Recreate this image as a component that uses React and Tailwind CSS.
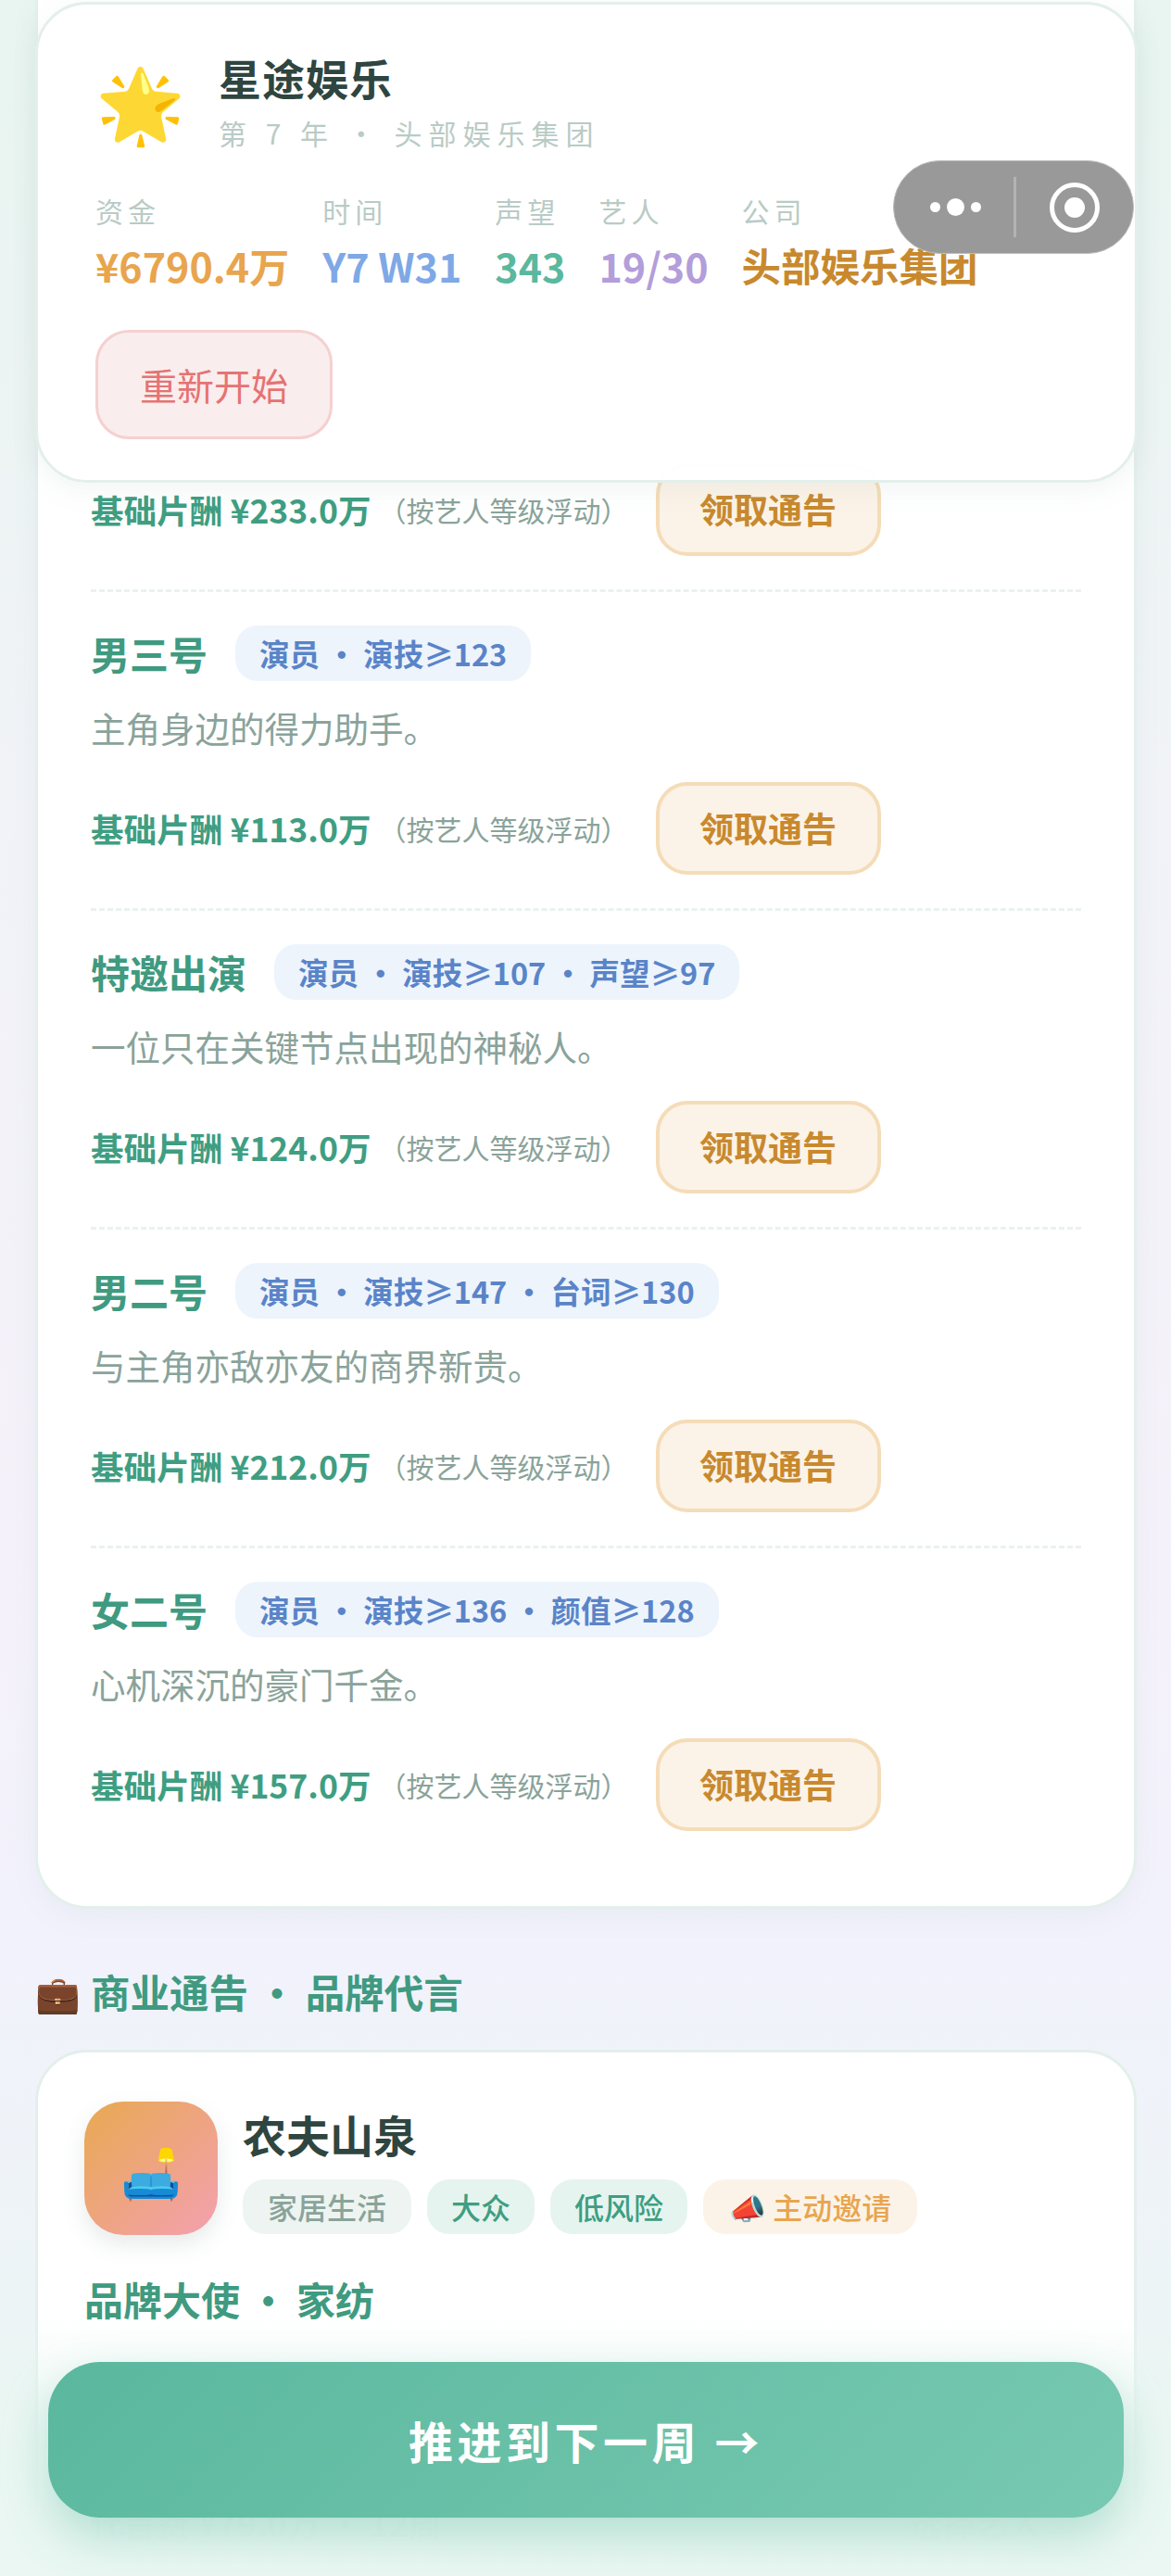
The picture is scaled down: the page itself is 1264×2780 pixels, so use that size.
const cjk = "font-['Noto_Sans_CJK_SC','Noto_Sans',sans-serif]"

const roles = [
  { name: '男三号', tags: '演员 · 演技≥123', desc: '主角身边的得力助手。', pay: '¥113.0万' },
  { name: '特邀出演', tags: '演员 · 演技≥107 · 声望≥97', desc: '一位只在关键节点出现的神秘人。', pay: '¥124.0万' },
  { name: '男二号', tags: '演员 · 演技≥147 · 台词≥130', desc: '与主角亦敌亦友的商界新贵。', pay: '¥212.0万' },
  { name: '女二号', tags: '演员 · 演技≥136 · 颜值≥128', desc: '心机深沉的豪门千金。', pay: '¥157.0万' },
]

const stats = [
  { label: '资金', value: '¥6790.4万', color: 'text-[#e8a54e]' },
  { label: '时间', value: 'Y7 W31', color: 'text-[#7fa8e6]' },
  { label: '声望', value: '343', color: 'text-[#5ab89e]' },
  { label: '艺人', value: '19/30', color: 'text-[#b39ddb]' },
  { label: '公司', value: '头部娱乐集团', color: 'text-[#c8892e]' },
]

function RoleFooter({ pay }) {
  return (
    <div className="flex items-center">
      <span className="text-[35.6px] font-bold text-[#3f9e82]">基础片酬 {pay}</span>
      <span className="ml-[8px] text-[30px] text-[#8aa39a]">（按艺人等级浮动）</span>
      <button className="ml-[29px] h-[100px] w-[243px] rounded-[34px] border-[4px] border-[#f5dcb8] bg-[#fcf3e8] text-[37px] font-bold text-[#c8892e]">
        领取通告
      </button>
    </div>
  )
}

function RoleRow({ role, last }) {
  return (
    <div className={`pt-[36px] ${last ? '' : 'border-b-[3px] border-dashed border-[#eaf2ef] pb-[36px]'}`}>
      <div className="flex items-center gap-[30px]">
        <span className="text-[42px] font-bold leading-[60px] text-[#3f9a80]">{role.name}</span>
        <span className="rounded-[24px] bg-[#edf4fc] px-[26px] text-[32.5px] font-bold leading-[60px] text-[#5a84c8]">
          {role.tags}
        </span>
      </div>
      <p className="mt-[20px] text-[37.5px] leading-[60px] text-[#8aa39a]">{role.desc}</p>
      <div className="mt-[29px]">
        <RoleFooter pay={role.pay} />
      </div>
    </div>
  )
}

function Capsule() {
  return (
    <div className="absolute left-[964px] top-[173px] flex h-[101px] w-[260px] items-center rounded-full border border-[#bdbdbd] bg-[#999999]">
      <div className="flex w-[129px] items-center justify-center gap-[7px] pl-[3px]">
        <span className="h-[11px] w-[11px] rounded-full bg-white" />
        <span className="h-[19px] w-[19px] rounded-full bg-white" />
        <span className="h-[11px] w-[11px] rounded-full bg-white" />
      </div>
      <div className="h-[65px] w-[3px] bg-[#b3b3b3]" />
      <div className="flex flex-1 items-center justify-center">
        <div className="flex h-[54px] w-[54px] items-center justify-center rounded-full border-[5px] border-white">
          <span className="h-[22px] w-[22px] rounded-full bg-white" />
        </div>
      </div>
    </div>
  )
}

export default function App() {
  return (
    <div className={`relative h-[2780px] w-[1264px] overflow-hidden bg-[linear-gradient(180deg,#e8f5f0_0%,#f1f3f7_30%,#f5f1fa_60%,#f2f2fc_75%,#e9f6f1_100%)] ${cjk}`}>
      {/* scrolled page content */}
      <div className="pl-[38px] pr-[37px]">
        <div className="rounded-b-[56px] border-x-[3px] border-b-[3px] border-[#e3efeb] bg-white px-[57px] pb-[81px] pt-[500px] shadow-[0_10px_30px_rgba(90,140,120,0.06)]">
          <div className="border-b-[3px] border-dashed border-[#eaf2ef] pb-[36px]">
            <RoleFooter pay="¥233.0万" />
          </div>
          {roles.map((role, i) => (
            <RoleRow key={role.name} role={role} last={i === roles.length - 1} />
          ))}
        </div>

        <h2 className="mt-[59px] flex h-[60px] items-center gap-[11px] text-[42.5px] font-bold text-[#3f9a80]">
          <span className="text-[39px]">💼</span>
          商业通告 · 品牌代言
        </h2>

        <div className="mt-[33px] rounded-[56px] border-[3px] border-[#e3efeb] bg-white px-[50px] pb-[40px] pt-[53px]">
          <div className="flex items-start gap-[27px]">
            <div className="flex h-[144px] w-[144px] items-center justify-center rounded-[42px] bg-[linear-gradient(135deg,#e8a951,#f4a0b0)] pt-[6px] text-[53px] shadow-[0_10px_24px_rgba(60,90,80,0.12)]">
              🛋️
            </div>
            <div>
              <div className="mt-[5px] text-[47px] font-bold leading-[60px] text-[#2f4540]">农夫山泉</div>
              <div className="mt-[19px] flex gap-[17px] text-[32px] font-medium leading-[59px]">
                <span className="rounded-[24px] bg-[#edf4f1] px-[27px] text-[#8aa39a]">家居生活</span>
                <span className="rounded-[24px] bg-[#e6f4ef] px-[26px] text-[#3f9e82]">大众</span>
                <span className="rounded-[24px] bg-[#e6f4ef] px-[26px] text-[#3f9e82]">低风险</span>
                <span className="rounded-[24px] bg-[#fcf3e8] px-[28px] text-[#e8a54e]">📣 主动邀请</span>
              </div>
            </div>
          </div>
          <div className="mt-[39px] text-[42px] font-bold leading-[60px] text-[#3f9a80]">品牌大使 · 家纺</div>
          <div className="mt-[181px] flex items-center justify-between pl-[6px] pr-[49px] text-[36px] font-bold leading-[60px] text-[#3f9e82]">
            <span>代言费 ¥79.0万 · 12周</span>
            <span className="text-[#c8892e]">选择艺人</span>
          </div>
        </div>
      </div>

      {/* sticky status header */}
      <header className="absolute left-[38px] top-[2px] h-[519px] w-[1190px] rounded-[56px] border-[3px] border-[#e3efeb] bg-white/97 px-[62px] pt-[47px] shadow-[0_8px_30px_rgba(90,140,120,0.08)]">
        <div className="flex items-center gap-[36px]">
          <span className="pb-[4px] text-[78px] leading-[110px]">🌟</span>
          <div>
            <div className="text-[46px] font-bold leading-[60px] tracking-[1px] text-[#2f4540]">星途娱乐</div>
            <div className="mt-[8px] text-[30px] leading-[44px] tracking-[7px] text-[#b9cbc5]">第 7 年 · 头部娱乐集团</div>
          </div>
        </div>
        <div className="mt-[39px] flex gap-[36px]">
          {stats.map((stat) => (
            <div key={stat.label}>
              <div className="text-[30px] leading-[44px] tracking-[5px] text-[#b9cbc5]">{stat.label}</div>
              <div className={`mt-[7px] font-bold leading-[60px] ${stat.label === '公司' ? 'text-[42.5px]' : 'text-[43px]'} ${stat.color}`}>{stat.value}</div>
            </div>
          ))}
        </div>
        <button className="mt-[40px] h-[118px] w-[256px] rounded-[36px] border-[3px] border-[#f5d0d0] bg-[#f9eded] text-[40px] text-[#e57373]">
          重新开始
        </button>
      </header>

      <Capsule />

      {/* bottom action bar */}
      <div className="absolute inset-x-0 bottom-0 h-[280px] bg-[linear-gradient(180deg,rgba(234,247,242,0)_0%,rgba(234,247,242,0.7)_35%,rgba(234,247,242,0.98)_78%,#eaf7f2_100%)] px-[52px] pt-[49px]">
        <button className="flex h-[168px] w-[1161px] items-center justify-center rounded-[56px] bg-[linear-gradient(135deg,#5ab89e,#78c9b1)] text-[48px] font-bold tracking-[4.5px] text-white shadow-[0_20px_48px_rgba(90,184,158,0.38)]">
          推进到下一周 →
        </button>
      </div>
    </div>
  )
}
